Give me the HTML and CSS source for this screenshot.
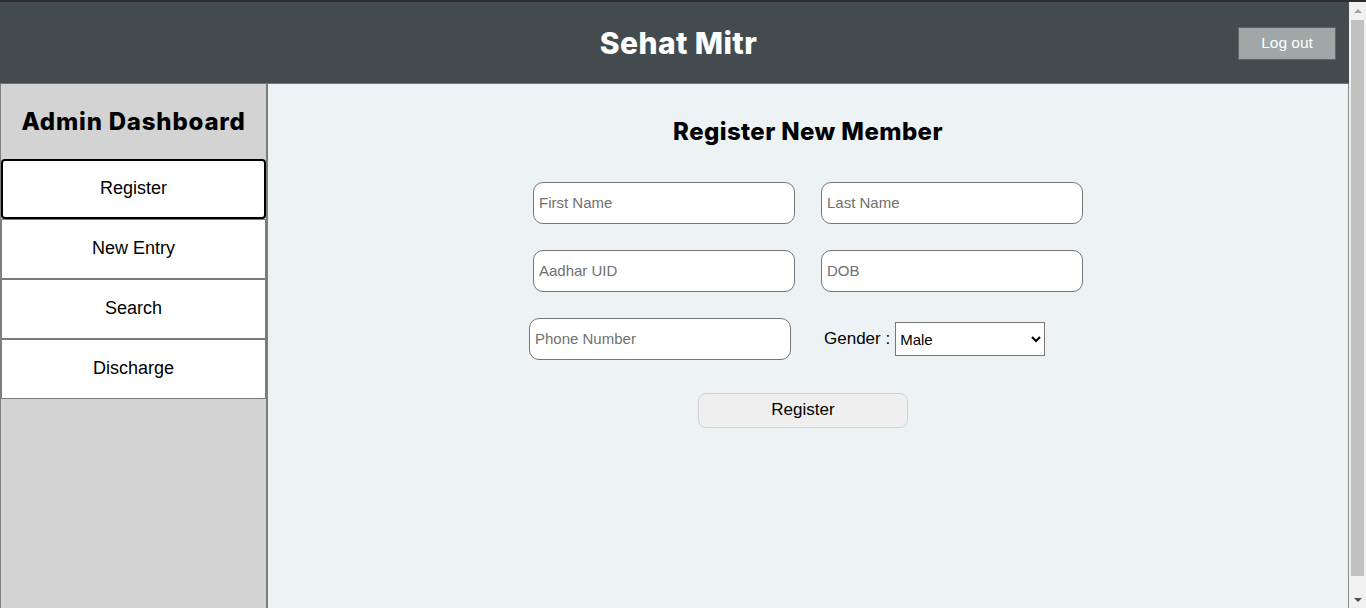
FILE: index.html
```html
<!DOCTYPE html>
<html lang="en">
<head>
<meta charset="utf-8">
<title>Sehat Mitr - Admin</title>
<link rel="stylesheet" href="styles.css">
</head>
<body>
<div class="window">
  <div class="app">
    <header class="topbar">
      <div class="topbar-spacer"></div>
      <h1 class="brand">Sehat Mitr</h1>
      <div class="topbar-actions"><button class="logout" type="button">Log out</button></div>
    </header>
    <div class="layout">
      <aside class="sidebar">
        <h2 class="sidebar-title">Admin Dashboard</h2>
        <nav class="nav">
          <button class="nav-btn active" type="button">Register</button>
          <button class="nav-btn" type="button">New Entry</button>
          <button class="nav-btn" type="button">Search</button>
          <button class="nav-btn" type="button">Discharge</button>
        </nav>
      </aside>
      <main class="content">
        <h2 class="page-title">Register New Member</h2>
        <form class="reg-form">
          <div class="form-grid">
            <input class="field" type="text" placeholder="First Name">
            <input class="field" type="text" placeholder="Last Name">
            <input class="field" type="text" placeholder="Aadhar UID">
            <input class="field" type="text" placeholder="DOB">
            <input class="field field-phone" type="text" placeholder="Phone Number">
            <label class="gender">Gender :
              <select class="gender-select">
                <option>Male</option>
                <option>Female</option>
                <option>Other</option>
              </select>
            </label>
          </div>
          <button class="submit" type="button">Register</button>
        </form>
      </main>
    </div>
  </div>
  <div class="scrollbar" aria-hidden="true">
    <div class="sb-arrow sb-up"></div>
    <div class="sb-track"><div class="sb-thumb"></div></div>
    <div class="sb-arrow sb-down"></div>
  </div>
</div>
</body>
</html>
```
FILE: styles.css
```css
* { box-sizing: border-box; }
html, body { margin: 0; padding: 0; height: 100%; overflow: hidden; }
body {
  font-family: "Liberation Sans", Arial, sans-serif;
  background: #edf2f5;
}
.window {
  display: flex;
  height: 608px;
  border-top: 2px solid #2d2d2d;
}
.app {
  flex: 1;
  display: flex;
  flex-direction: column;
  min-width: 0;
}
.topbar {
  display: grid;
  grid-template-columns: 1fr auto 1fr;
  align-items: center;
  height: 82px;
  flex: none;
  background: #434b4e;
  border-bottom: 1px solid #6e7578;
  padding-left: 8px;
}
.brand {
  margin: 0;
  font-family: Inter, "Open Sans", sans-serif;
  font-weight: 800;
  font-size: 30px;
  letter-spacing: 0.4px;
  color: #ffffff;
}
.topbar-actions {
  display: flex;
  justify-content: flex-end;
  padding-right: 13px;
  padding-top: 2px;
}
.logout {
  width: 98px;
  height: 33px;
  background: #a1a6a7;
  border: 1px solid #5f6669;
  color: #ffffff;
  font-family: "Liberation Sans", Arial, sans-serif;
  font-size: 15.5px;
  padding: 0 0 1px;
}
.layout {
  flex: 1;
  display: flex;
}
.sidebar {
  width: 268px;
  flex: none;
  background: #d3d3d3;
  border-left: 1px solid #808080;
  border-right: 2px solid #7d7d7d;
}
.sidebar-title {
  margin: 0;
  height: 75px;
  display: flex;
  align-items: center;
  justify-content: center;
  font-family: Inter, "Open Sans", sans-serif;
  font-weight: 800;
  font-size: 24px;
  letter-spacing: 0.8px;
  color: #000;
}
.nav {
  display: flex;
  flex-direction: column;
}
.nav-btn {
  height: 60px;
  background: #ffffff;
  border: 1px solid #7a7a7a;
  font-family: "Liberation Sans", Arial, sans-serif;
  font-size: 18px;
  color: #000;
  padding: 0 0 2px;
}
.nav-btn.active {
  border: 2px solid #000;
  border-radius: 4px;
}
.content {
  flex: 1;
  display: flex;
  flex-direction: column;
  align-items: center;
  border-right: 1px solid #8a8a8a;
}
.page-title {
  margin: 34px 0 0;
  font-family: Inter, "Open Sans", sans-serif;
  font-weight: 800;
  font-size: 24px;
  letter-spacing: 0.4px;
  color: #000;
  line-height: 28px;
}
.reg-form {
  display: flex;
  flex-direction: column;
  align-items: center;
  margin-top: 36px;
}
.form-grid {
  display: grid;
  grid-template-columns: 262px 262px;
  column-gap: 26px;
  row-gap: 26px;
}
.field {
  width: 262px;
  height: 42px;
  border: 1px solid #767676;
  border-radius: 10px;
  background: #fff;
  padding: 0 5px 2px;
  font-family: "Liberation Sans", Arial, sans-serif;
  font-size: 15px;
  color: #000;
}
.field::placeholder { color: #707070; }
.field-phone { margin-left: -4px; }
.gender {
  display: flex;
  align-items: center;
  gap: 5px;
  padding-left: 3px;
  font-size: 17px;
  color: #000;
}
.gender-select {
  width: 150px;
  height: 34px;
  border: 1px solid #767676;
  border-radius: 0;
  background: #fff;
  font-family: "Liberation Sans", Arial, sans-serif;
  font-size: 15px;
  color: #000;
}
.submit {
  margin-top: 33px;
  margin-right: 10px;
  width: 210px;
  height: 35px;
  background: #efefef;
  border: 1px solid #cfd0dc;
  border-radius: 8px;
  font-family: "Liberation Sans", Arial, sans-serif;
  font-size: 17px;
  color: #000;
  padding: 0 0 2px;
}
.scrollbar {
  width: 17px;
  flex: none;
  display: flex;
  flex-direction: column;
  background: #f1f1f1;
}
.sb-arrow {
  height: 17px;
  flex: none;
  display: flex;
  align-items: center;
  justify-content: center;
}
.sb-up::before, .sb-down::before {
  content: "";
  width: 0;
  height: 0;
  border-left: 4px solid transparent;
  border-right: 4px solid transparent;
}
.sb-up::before { border-bottom: 4px solid #a3a3a3; }
.sb-down::before { border-top: 4px solid #505050; }
.sb-track {
  flex: 1;
  padding: 1px 2px 15px;
  display: flex;
}
.sb-thumb {
  flex: 1;
  background: #c1c1c1;
}
```
